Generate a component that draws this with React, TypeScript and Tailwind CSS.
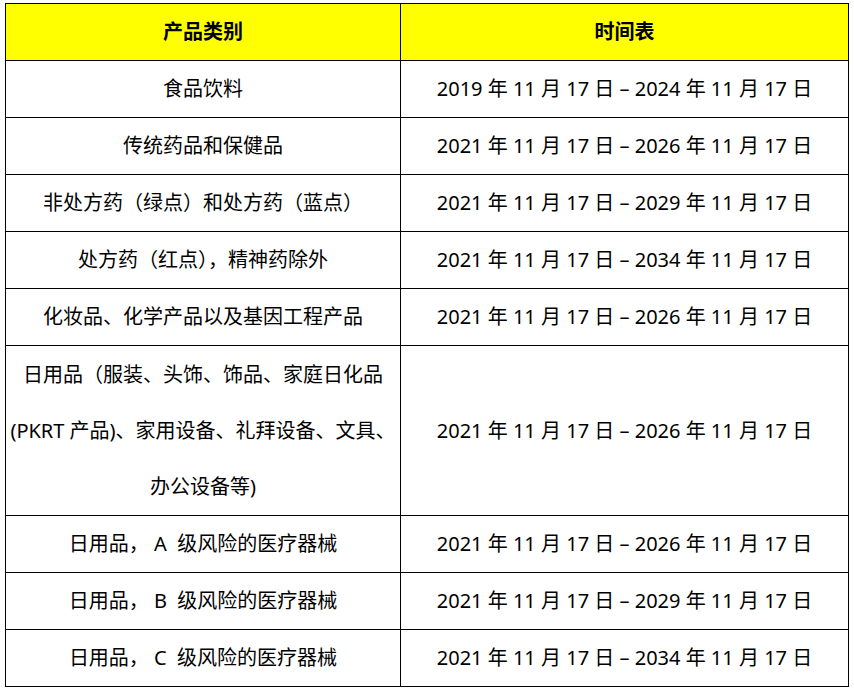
const rows: { name: React.ReactNode; date: string; tall?: boolean }[] = [
  { name: '食品饮料', date: '2019 年 11 月 17 日 – 2024 年 11 月 17 日' },
  { name: '传统药品和保健品', date: '2021 年 11 月 17 日 – 2026 年 11 月 17 日' },
  { name: '非处方药（绿点）和处方药（蓝点）', date: '2021 年 11 月 17 日 – 2029 年 11 月 17 日' },
  { name: '处方药（红点），精神药除外', date: '2021 年 11 月 17 日 – 2034 年 11 月 17 日' },
  { name: '化妆品、化学产品以及基因工程产品', date: '2021 年 11 月 17 日 – 2026 年 11 月 17 日' },
  {
    name: (
      <>
        日用品（服装、头饰、饰品、家庭日化品
        <br />
        (PKRT 产品)、家用设备、礼拜设备、文具、
        <br />
        办公设备等)
      </>
    ),
    date: '2021 年 11 月 17 日 – 2026 年 11 月 17 日',
    tall: true,
  },
  { name: '日用品，\u00a0A\u00a0 级风险的医疗器械', date: '2021 年 11 月 17 日 – 2026 年 11 月 17 日' },
  { name: '日用品，\u00a0B\u00a0 级风险的医疗器械', date: '2021 年 11 月 17 日 – 2029 年 11 月 17 日' },
  { name: '日用品，\u00a0C\u00a0 级风险的医疗器械', date: '2021 年 11 月 17 日 – 2034 年 11 月 17 日' },
];

export default function App() {
  return (
    <div
      className="bg-white w-[854px] h-[692px] pt-[3px] pl-[5px] text-black"
      style={{ fontFamily: '"Noto Sans", "Noto Sans CJK SC", sans-serif' }}
    >
      <table className="border-collapse w-[844px] table-fixed text-[20px]">
        <colgroup>
          <col className="w-[395px]" />
          <col />
        </colgroup>
        <thead>
          <tr className="h-[57px] bg-[#ffff00]">
            <th className="border border-black text-center font-bold">产品类别</th>
            <th className="border border-black text-center font-bold">时间表</th>
          </tr>
        </thead>
        <tbody>
          {rows.map((r, i) => (
            <tr key={i} className={r.tall ? 'h-[170px]' : 'h-[57px]'}>
              <td className="border border-black text-center leading-[56px] px-0 whitespace-nowrap">{r.name}</td>
              <td className="border border-black text-center whitespace-nowrap">{r.date}</td>
            </tr>
          ))}
        </tbody>
      </table>
    </div>
  );
}
